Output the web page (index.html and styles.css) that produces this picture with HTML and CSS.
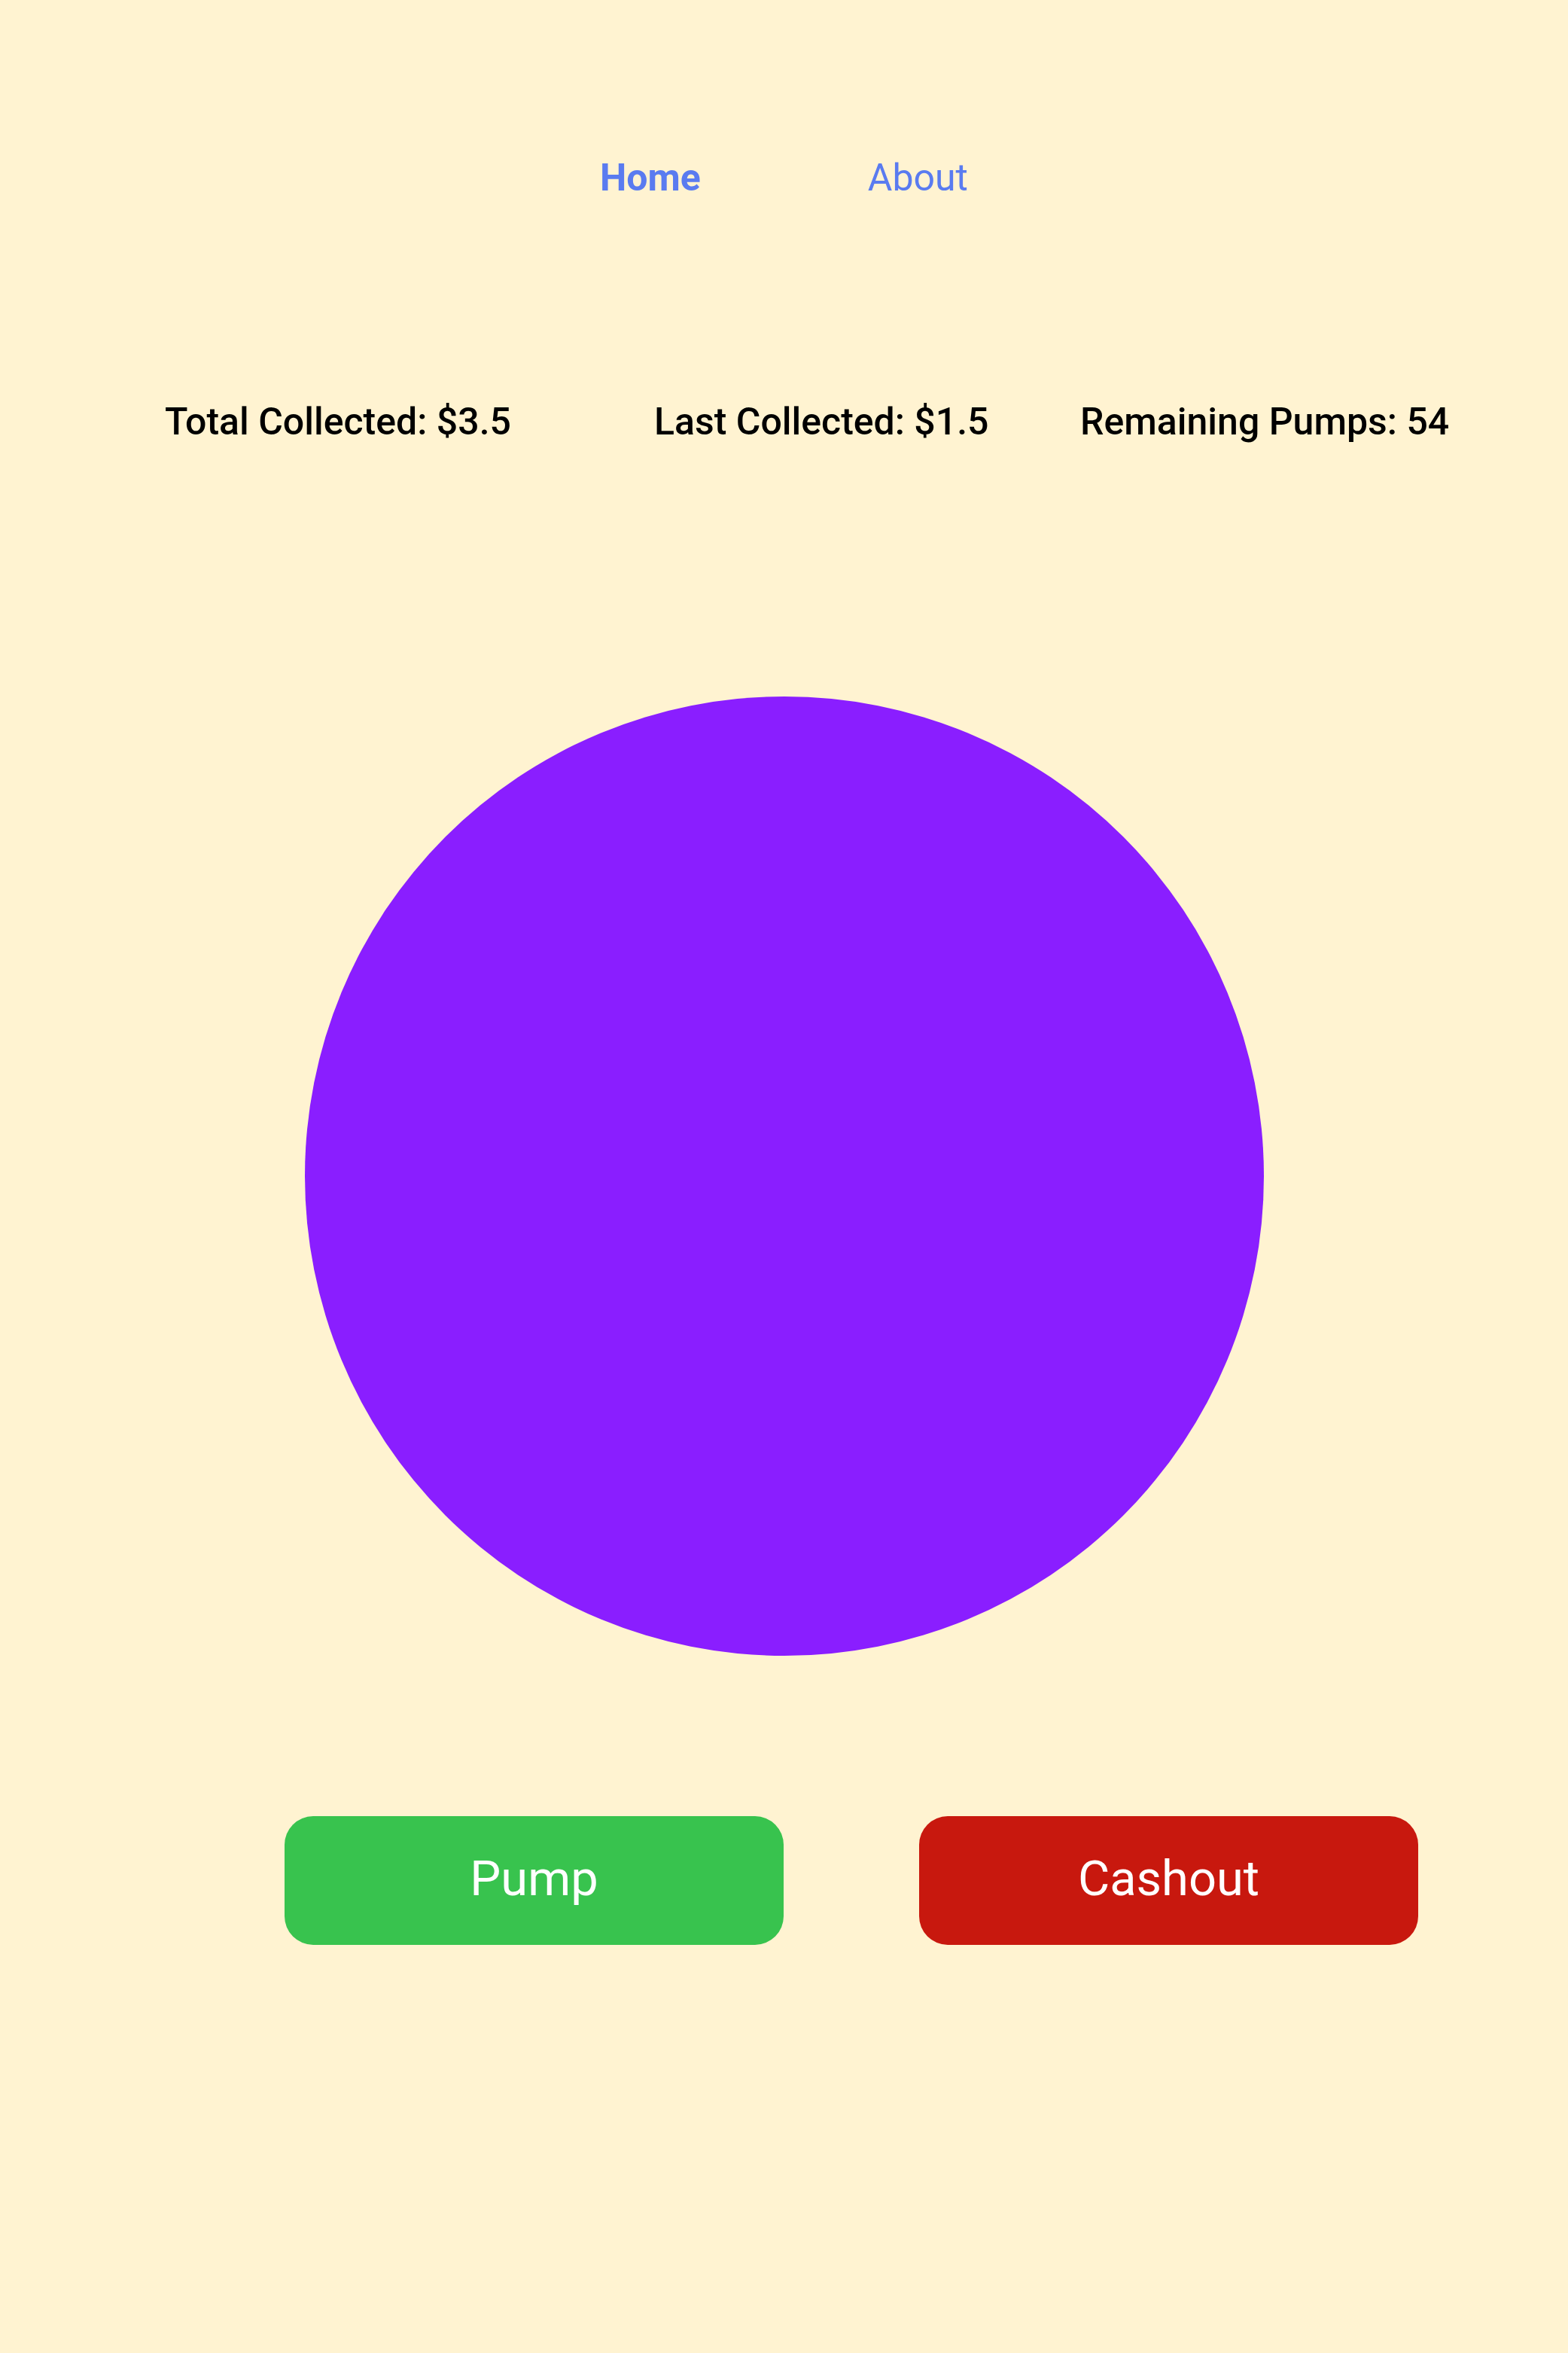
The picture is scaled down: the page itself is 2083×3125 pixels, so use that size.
FILE: index.html
```html
<!DOCTYPE html>
<html lang="en">
<head>
<meta charset="utf-8">
<title>Balloon</title>
<link rel="stylesheet" href="styles.css">
</head>
<body>
<div class="page">
  <nav class="nav">
    <a class="nav-link nav-link--active" href="#">Home</a>
    <a class="nav-link" href="#">About</a>
  </nav>
  <section class="stats">
    <div class="stat stat--total">Total Collected: $3.5</div>
    <div class="stat stat--last">Last Collected: $1.5</div>
    <div class="stat stat--remaining">Remaining Pumps: 54</div>
  </section>
  <div class="stage">
    <div class="balloon"></div>
  </div>
  <div class="actions">
    <button class="btn btn--pump" type="button">Pump</button>
    <button class="btn btn--cashout" type="button">Cashout</button>
  </div>
</div>
</body>
</html>
```

FILE: styles.css
```css
html, body {
  margin: 0;
  padding: 0;
}
body {
  background: #fff3d1;
  font-family: Roboto, "Liberation Sans", Arial, sans-serif;
  min-height: 3125px;
}
.page {
  display: flex;
  flex-direction: column;
}
.nav {
  display: flex;
  justify-content: center;
  gap: 222px;
  padding-top: 208px;
}
.nav-link {
  color: #5a7bf0;
  text-decoration: none;
  font-size: 50px;
  line-height: 56px;
  font-weight: 400;
}
.nav-link--active {
  font-weight: 700;
}
.stats {
  display: flex;
  padding-top: 268px;
  padding-left: 219px;
}
.stat {
  font-size: 50px;
  line-height: 56px;
  font-weight: 500;
  color: #000;
}
.stat--total {
  width: 650px;
}
.stat--last {
  width: 566px;
}
.stage {
  display: flex;
  justify-content: center;
  padding-top: 337px;
  padding-left: 1px;
}
.balloon {
  width: 1274px;
  height: 1274px;
  border-radius: 50%;
  background: #8a1eff;
}
.actions {
  display: flex;
  gap: 180px;
  padding-top: 213px;
  padding-left: 378px;
}
.btn {
  width: 663px;
  height: 171px;
  border: none;
  border-radius: 38px;
  color: #fff;
  font-family: Roboto, "Liberation Sans", Arial, sans-serif;
  font-size: 65px;
  font-weight: 400;
  padding: 0 0 6px;
  cursor: pointer;
}
.btn--pump {
  background: #38c34e;
}
.btn--cashout {
  background: #c8180e;
}
```
